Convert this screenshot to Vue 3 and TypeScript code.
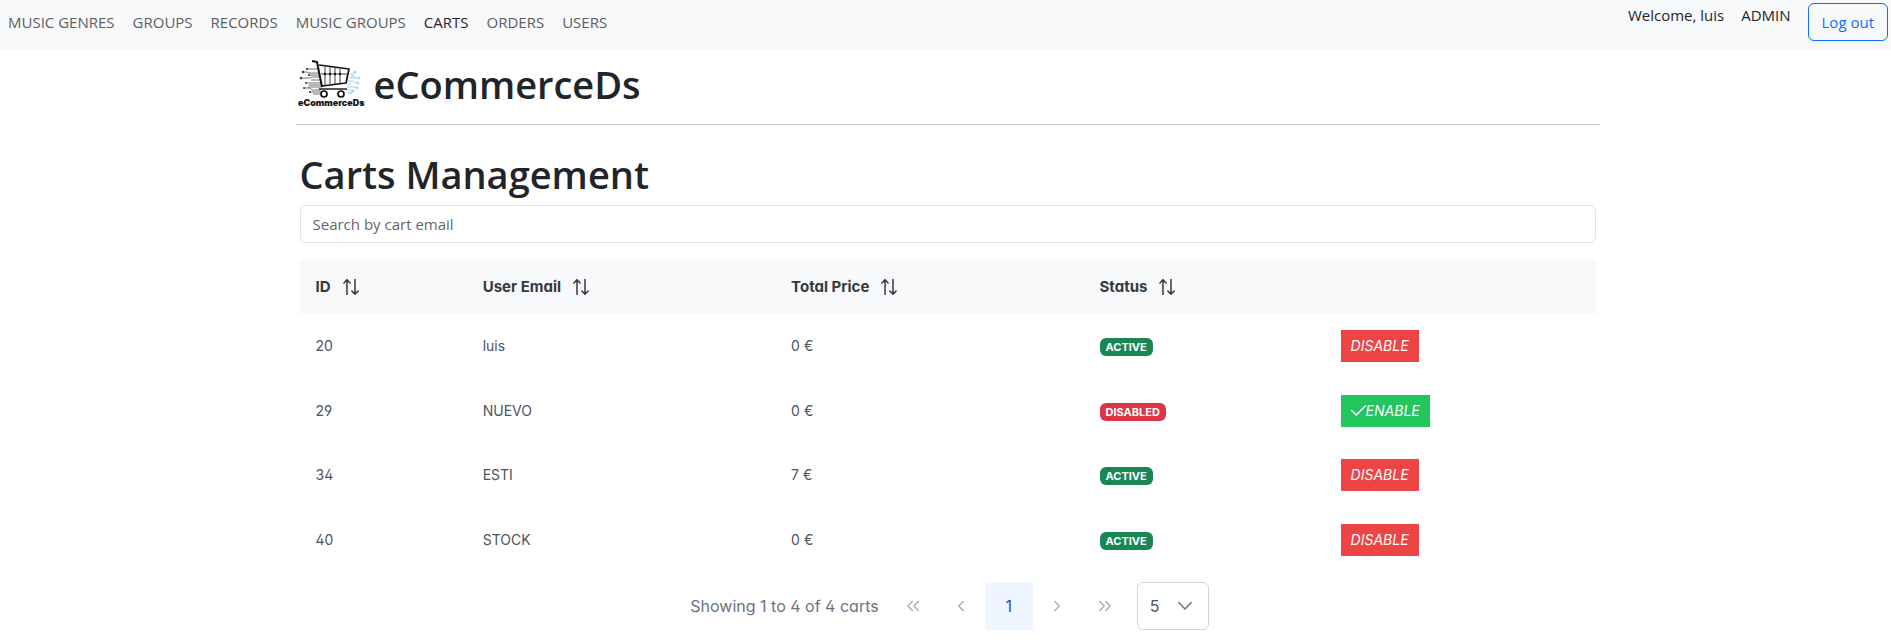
<script setup lang="ts">
import { computed, ref } from 'vue'

interface Cart {
  id: number
  email: string
  total: number
  enabled: boolean
}

const links = ['MUSIC GENRES', 'GROUPS', 'RECORDS', 'MUSIC GROUPS', 'CARTS', 'ORDERS', 'USERS']
const columns = ['ID', 'User Email', 'Total Price', 'Status']
const search = ref('')
const pageSize = ref(5)
const carts = ref<Cart[]>([
  { id: 20, email: 'luis', total: 0, enabled: true },
  { id: 29, email: 'NUEVO', total: 0, enabled: false },
  { id: 34, email: 'ESTI', total: 7, enabled: true },
  { id: 40, email: 'STOCK', total: 0, enabled: true },
])
const shown = computed(() =>
  carts.value.filter((c) => c.email.toLowerCase().includes(search.value.toLowerCase())),
)
</script>

<template>
  <header class="navbar">
    <nav class="links">
      <a v-for="l in links" :key="l" href="#" :class="{ active: l === 'CARTS' }">{{ l }}</a>
    </nav>
    <div class="account">
      <span>Welcome, luis</span>
      <span>ADMIN</span>
      <button type="button" class="logout">Log out</button>
    </div>
  </header>

  <div class="container">
    <div class="brand">
      <svg class="logo" viewBox="0 0 66 48" role="img" aria-label="eCommerceDs logo">
        <g fill="none" stroke="#4c4c4c" stroke-width="0.8">
          <path d="M9 9h12M5 12h4l2 1h11M10 15h12M3 18h9l2-1h8M13 20h9M8 23h15M11 25h12M6 28h6l2 2h9M12 32h11M15 34h8M10 27h13" />
        </g>
        <g fill="#333">
          <circle cx="9" cy="9" r="1.1" /><circle cx="5" cy="12" r="1.2" /><circle cx="11" cy="15" r="1" />
          <circle cx="3" cy="18" r="1.2" /><circle cx="8" cy="23" r="0.9" /><circle cx="6" cy="28" r="1" />
          <circle cx="12" cy="32" r="1" />
        </g>
        <g fill="none" stroke="#7cc6df" stroke-width="0.8">
          <path d="M52 14h3l2-2M51 18h9M50 21h5l2 2h2M49 24h4M49 27h8l2 1M49 30h4l2 1M49 33h3M53 16h4" />
          <circle cx="57" cy="12" r="1" /><circle cx="61" cy="18" r="1" /><circle cx="60" cy="23" r="1" />
          <circle cx="59" cy="28" r="1" /><circle cx="55" cy="31" r="1" /><circle cx="53" cy="33" r="1" />
        </g>
        <g fill="none" stroke="#111" stroke-linejoin="round">
          <path d="M14 1l5 1 5 25" stroke-width="2" />
          <path d="M21 5l30 4-3 14-24 3" stroke-width="1.7" />
          <path d="M21 29h28" stroke-width="1.4" />
          <path d="M27 7v18M32 7v17M37 8v16M42 9v15M23 14h26" stroke-width="0.8" />
          <circle cx="26" cy="34" r="3" fill="#fff" stroke-width="1.7" />
          <circle cx="43" cy="34" r="3" fill="#fff" stroke-width="1.7" />
        </g>
        <g fill="#111">
          <circle cx="27" cy="14" r="1.2" /><circle cx="32" cy="14" r="1.2" /><circle cx="37" cy="14" r="1.2" /><circle cx="42" cy="14" r="1.2" />
        </g>
        <text x="0" y="46" class="logo-text">eCommerceDs</text>
      </svg>
      <h1>eCommerceDs</h1>
    </div>

    <main class="content">
      <h1>Carts Management</h1>
      <input v-model="search" class="search" type="text" placeholder="Search by cart email" aria-label="Search by cart email" />

      <table>
        <colgroup>
          <col class="c-id" /><col class="c-wide" /><col class="c-wide" /><col class="c-status" /><col />
        </colgroup>
        <thead>
          <tr>
            <th v-for="c in columns" :key="c" scope="col">
              <span class="head">{{ c }}
                <svg class="sort" viewBox="0 0 16 16" aria-hidden="true">
                  <path d="M4 15.500V.8M.9 4 4 .8 7.100 4M12 .5v14.700M8.900 12l3.100 3.200 3.100-3.200" />
                </svg>
              </span>
            </th>
            <td></td>
          </tr>
        </thead>
        <tbody>
          <tr v-for="c in shown" :key="c.id">
            <td>{{ c.id }}</td>
            <td>{{ c.email }}</td>
            <td>{{ c.total }} €</td>
            <td><span class="badge" :class="{ off: !c.enabled }">{{ c.enabled ? 'ACTIVE' : 'DISABLED' }}</span></td>
            <td>
              <button type="button" class="toggle" :class="{ enable: !c.enabled }" @click="c.enabled = !c.enabled">
                <svg v-if="!c.enabled" class="check" viewBox="0 0 15 12" aria-hidden="true"><path d="M.7 5.500 5.300 10 14.300 1" /></svg>
                {{ c.enabled ? 'DISABLE' : 'ENABLE' }}
              </button>
            </td>
          </tr>
        </tbody>
      </table>

      <div class="paginator">
        <span class="report">Showing 1 to {{ shown.length }} of {{ shown.length }} carts</span>
        <button type="button" class="page dim" aria-label="First page"><svg viewBox="0 0 14 14"><path d="M6.300 2.500 1.800 7l4.500 4.500M12.300 2.500 7.800 7l4.500 4.500" /></svg></button>
        <button type="button" class="page dim" aria-label="Previous page"><svg viewBox="0 0 14 14"><path d="M9.200 2.500 4.700 7l4.500 4.500" /></svg></button>
        <button type="button" class="page current">1</button>
        <button type="button" class="page dim" aria-label="Next page"><svg viewBox="0 0 14 14"><path d="M4.800 2.500 9.300 7l-4.500 4.500" /></svg></button>
        <button type="button" class="page dim" aria-label="Last page"><svg viewBox="0 0 14 14"><path d="M1.700 2.500 6.200 7l-4.500 4.500M7.700 2.500 12.200 7l-4.500 4.500" /></svg></button>
        <div class="size">
          <select v-model="pageSize" aria-label="Rows per page">
            <option :value="5">5</option>
            <option :value="10">10</option>
            <option :value="20">20</option>
          </select>
          <svg viewBox="0 0 16 16" aria-hidden="true"><path d="M1.800 4.500 8 11l6.200-6.500" /></svg>
        </div>
      </div>
    </main>
  </div>
</template>

<style>
body {
  margin: 0;
  background: #fff;
  color: #212529;
  font: 15px/24px "Segoe UI", "Open Sans", sans-serif;
}
</style>

<style scoped>
* {
  box-sizing: border-box;
}
button,
input,
select {
  font: inherit;
  color: inherit;
}
.navbar {
  display: flex;
  justify-content: space-between;
  height: 50px;
  background: #f8f9fa;
}
.links {
  display: flex;
  align-items: center;
  gap: 18px;
  padding: 0 8px 6px;
}
.links a {
  color: #5b5d5f;
  text-decoration: none;
}
.links a.active {
  color: #212529;
}
.account {
  display: flex;
  align-items: flex-start;
  gap: 17px;
  padding: 3px;
}
.logout {
  height: 38px;
  padding: 0 13px;
  border: 1px solid #0d6efd;
  border-radius: 6px;
  background: transparent;
  color: #0d6efd;
}
.container {
  width: 69%;
  max-width: 1304px;
  margin: 0 auto;
  position: relative;
  left: 2px;
}
h1 {
  margin: 0;
  font-size: 38px;
  line-height: 48px;
  font-weight: 600;
}
.brand {
  display: flex;
  align-items: center;
  gap: 10px;
  height: 75px;
  padding: 0 2px 6px;
  border-bottom: 1px solid #c7c8c9;
}
.logo {
  width: 66px;
  height: 48px;
  overflow: visible;
}
.logo-text {
  font: 900 9px Inter, sans-serif;
  fill: #111;
}
.content {
  padding: 25px 4px 0;
}
.search {
  display: block;
  width: 100%;
  height: 38px;
  margin: 7px 0 16px;
  padding: 0 12px;
  border: 1px solid #dee2e6;
  border-radius: 6px;
  background: #fff;
}
.search::placeholder {
  color: #62676c;
  opacity: 1;
}
table,
.paginator {
  font-family: Inter, sans-serif;
  font-feature-settings: "cv02", "cv03", "cv04", "cv11";
  color: #4b5563;
}
table {
  width: 100%;
  table-layout: fixed;
  border-collapse: collapse;
  font-size: 14px;
}
.c-id {
  width: 12.9%;
}
.c-wide {
  width: 23.8%;
}
.c-status {
  width: 18.6%;
}
th,
td {
  padding: 0 16px;
  text-align: left;
}
thead tr {
  height: 55px;
  background: #f8f9fa;
}
tbody tr {
  height: 64px;
}
tbody tr:nth-child(even) {
  height: 65px;
}
th {
  color: #343a40;
  font-size: 15px;
  font-weight: 700;
}
.head {
  display: flex;
  align-items: center;
  gap: 12px;
}
.sort {
  width: 16px;
  height: 16px;
}
svg.sort,
.check,
.page svg,
.size svg {
  fill: none;
  stroke: currentColor;
  stroke-width: 1.5;
  stroke-linecap: round;
  stroke-linejoin: round;
}
.badge {
  display: inline-block;
  padding: 0 6px;
  border-radius: 6px;
  background: #198754;
  color: #fff;
  font-size: 11px;
  line-height: 18px;
  font-weight: 700;
}
.badge.off {
  background: #dc3545;
}
.toggle {
  display: inline-flex;
  align-items: center;
  height: 32px;
  padding: 0 10px;
  border: 0;
  background: #ef4444;
  color: #fff;
  font-style: italic;
}
.toggle.enable {
  background: #22c55e;
}
.check {
  width: 15px;
  height: 12px;
}
.paginator {
  display: flex;
  justify-content: center;
  align-items: center;
  padding: 10px 14px 8px 18px;
  font-size: 16px;
}
.report {
  margin-right: 10px;
  color: #6b7280;
}
.page {
  display: grid;
  place-items: center;
  width: 48px;
  height: 48px;
  padding: 0;
  border: 0;
  background: transparent;
}
.page svg {
  width: 14px;
  height: 14px;
}
.page.dim {
  color: #a9adb4;
}
.page.current {
  background: #eff6ff;
  color: #1d4ed8;
}
.size {
  display: grid;
  align-items: center;
  margin-left: 8px;
}
.size select {
  grid-area: 1 / 1;
  width: 72px;
  height: 48px;
  padding: 0 12px;
  border: 1px solid #d1d5db;
  border-radius: 6px;
  background: #fff;
  appearance: none;
}
.size svg {
  grid-area: 1 / 1;
  justify-self: end;
  width: 16px;
  height: 16px;
  margin-right: 16px;
  color: #6b7280;
  pointer-events: none;
}
</style>
